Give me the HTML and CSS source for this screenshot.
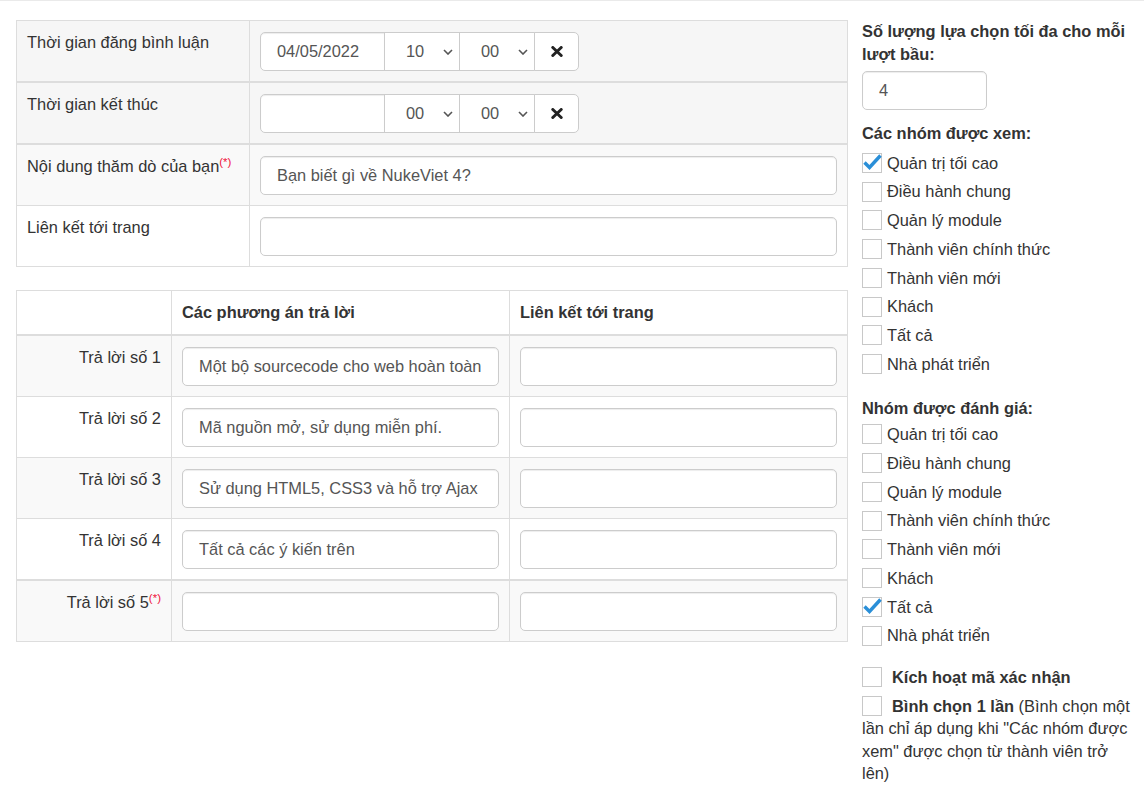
FILE: index.html
```html
<!DOCTYPE html>
<html lang="vi">
<head>
<meta charset="utf-8">
<title>Thăm dò ý kiến</title>
<link rel="stylesheet" href="styles.css">
</head>
<body>
<div class="page">
  <div class="main">
    <table class="tbl tbl-info">
      <colgroup><col class="col-label"><col></colgroup>
      <thead>
        <tr>
          <td>Thời gian đăng bình luận</td>
          <td>
            <div class="input-group">
              <div class="ig-date">04/05/2022</div>
              <div class="ig-select"><span>10</span><svg class="chev" width="10" height="6" viewBox="0 0 10 6"><path d="M1 1l4 4 4-4" fill="none" stroke="#555" stroke-width="1.6"/></svg></div>
              <div class="ig-select"><span>00</span><svg class="chev" width="10" height="6" viewBox="0 0 10 6"><path d="M1 1l4 4 4-4" fill="none" stroke="#555" stroke-width="1.6"/></svg></div>
              <div class="ig-btn"><svg width="12" height="11" viewBox="0 0 12 11"><path d="M1.8 1.5l8.4 8M10.2 1.5l-8.4 8" stroke="#222" stroke-width="3" stroke-linecap="round"/></svg></div>
            </div>
          </td>
        </tr>
        <tr>
          <td>Thời gian kết thúc</td>
          <td>
            <div class="input-group">
              <div class="ig-date"></div>
              <div class="ig-select"><span>00</span><svg class="chev" width="10" height="6" viewBox="0 0 10 6"><path d="M1 1l4 4 4-4" fill="none" stroke="#555" stroke-width="1.6"/></svg></div>
              <div class="ig-select"><span>00</span><svg class="chev" width="10" height="6" viewBox="0 0 10 6"><path d="M1 1l4 4 4-4" fill="none" stroke="#555" stroke-width="1.6"/></svg></div>
              <div class="ig-btn"><svg width="12" height="11" viewBox="0 0 12 11"><path d="M1.8 1.5l8.4 8M10.2 1.5l-8.4 8" stroke="#222" stroke-width="3" stroke-linecap="round"/></svg></div>
            </div>
          </td>
        </tr>
      </thead>
      <tbody>
        <tr class="odd">
          <td>Nội dung thăm dò của bạn<sup class="req">(*)</sup></td>
          <td><div class="form-control">Bạn biết gì về NukeViet 4?</div></td>
        </tr>
        <tr>
          <td>Liên kết tới trang</td>
          <td><div class="form-control"></div></td>
        </tr>
      </tbody>
    </table>

    <table class="tbl tbl-answers">
      <colgroup><col class="col-num"><col><col></colgroup>
      <thead>
        <tr>
          <th></th>
          <th>Các phương án trả lời</th>
          <th>Liên kết tới trang</th>
        </tr>
      </thead>
      <tbody>
        <tr class="odd">
          <td class="num">Trả lời số 1</td>
          <td><div class="form-control">Một bộ sourcecode cho web hoàn toàn</div></td>
          <td><div class="form-control"></div></td>
        </tr>
        <tr>
          <td class="num">Trả lời số 2</td>
          <td><div class="form-control">Mã nguồn mở, sử dụng miễn phí.</div></td>
          <td><div class="form-control"></div></td>
        </tr>
        <tr class="odd">
          <td class="num">Trả lời số 3</td>
          <td><div class="form-control">Sử dụng HTML5, CSS3 và hỗ trợ Ajax</div></td>
          <td><div class="form-control"></div></td>
        </tr>
        <tr>
          <td class="num">Trả lời số 4</td>
          <td><div class="form-control">Tất cả các ý kiến trên</div></td>
          <td><div class="form-control"></div></td>
        </tr>
      </tbody>
      <tfoot>
        <tr class="odd">
          <td class="num">Trả lời số 5<sup class="req">(*)</sup></td>
          <td><div class="form-control"></div></td>
          <td><div class="form-control"></div></td>
        </tr>
      </tfoot>
    </table>
  </div>

  <aside class="side">
    <h4 class="side-title">Số lượng lựa chọn tối đa cho mỗi lượt bầu:</h4>
    <div class="form-control small-input">4</div>

    <h4 class="side-title gap">Các nhóm được xem:</h4>
    <ul class="cb-list">
      <li><span class="cb"><svg width="20" height="20" viewBox="0 0 20 20"><path d="M2.5 9.5l5 5L18.5 2.5" fill="none" stroke="#2a8fd8" stroke-width="3.4"/></svg></span>Quản trị tối cao</li>
      <li><span class="cb"></span>Điều hành chung</li>
      <li><span class="cb"></span>Quản lý module</li>
      <li><span class="cb"></span>Thành viên chính thức</li>
      <li><span class="cb"></span>Thành viên mới</li>
      <li><span class="cb"></span>Khách</li>
      <li><span class="cb"></span>Tất cả</li>
      <li><span class="cb"></span>Nhà phát triển</li>
    </ul>

    <h4 class="side-title gap2">Nhóm được đánh giá:</h4>
    <ul class="cb-list">
      <li><span class="cb"></span>Quản trị tối cao</li>
      <li><span class="cb"></span>Điều hành chung</li>
      <li><span class="cb"></span>Quản lý module</li>
      <li><span class="cb"></span>Thành viên chính thức</li>
      <li><span class="cb"></span>Thành viên mới</li>
      <li><span class="cb"></span>Khách</li>
      <li><span class="cb"><svg width="20" height="20" viewBox="0 0 20 20"><path d="M2.5 9.5l5 5L18.5 2.5" fill="none" stroke="#2a8fd8" stroke-width="3.4"/></svg></span>Tất cả</li>
      <li><span class="cb"></span>Nhà phát triển</li>
    </ul>

    <p class="opt first"><span class="cb inline"></span><strong>Kích hoạt mã xác nhận</strong></p>
    <p class="opt"><span class="cb inline"></span><strong>Bình chọn 1 lần</strong> (Bình chọn một lần chỉ áp dụng khi "Các nhóm được xem" được chọn từ thành viên trở lên)</p>
  </aside>
</div>
</body>
</html>
```

FILE: styles.css
```css
html, body {
  margin: 0;
  padding: 0;
  background: #fff;
}

body {
  font-family: "Liberation Sans", Arial, Helvetica, sans-serif;
  font-size: 16.4px;
  line-height: 23.4px;
  color: #333;
  border-top: 1px solid #eaeaea;
}

.page {
  display: grid;
  grid-template-columns: 832px 276px;
  column-gap: 14px;
  padding: 19px 0 0 16px;
  align-items: start;
}

/* tables */
.tbl {
  width: 100%;
  border-collapse: collapse;
  table-layout: fixed;
  border: 1px solid #ddd;
}

.tbl td,
.tbl th {
  border: 1px solid #ddd;
  padding: 10px;
  vertical-align: top;
  text-align: left;
}

.tbl th {
  font-weight: bold;
  border-bottom: 2px solid #ddd;
  background: #fff;
}

.tbl tr.odd td {
  background: #f9f9f9;
}

.tbl-info {
  margin-bottom: 23px;
}

.tbl-info .col-label {
  width: 233px;
}

.tbl-info thead td {
  background: #f6f6f6;
  border-bottom: 2px solid #ddd;
}

.tbl-answers .col-num {
  width: 155px;
}

.tbl-answers tfoot td {
  border-top: 2px solid #ddd;
}

.tbl td.num {
  text-align: right;
}

.req {
  color: #f0143c;
  font-size: 11.5px;
  line-height: 1;
  vertical-align: 6px;
}

/* inputs */
.form-control {
  box-sizing: border-box;
  height: 39px;
  margin-top: 1px;
  padding: 0 16px;
  border: 1px solid #ccc;
  border-radius: 5px;
  background: #fff;
  box-shadow: inset 0 1px 1px rgba(0, 0, 0, 0.075);
  color: #555;
  display: flex;
  align-items: center;
  white-space: nowrap;
  overflow: hidden;
}

.input-group {
  display: flex;
  height: 39px;
  margin-top: 1px;
  width: 319px;
}

.input-group > div {
  box-sizing: border-box;
  height: 39px;
  border: 1px solid #ccc;
  background: #fff;
  color: #555;
  display: flex;
  align-items: center;
}

.input-group > div + div {
  margin-left: -1px;
}

.ig-date {
  width: 125px;
  padding-left: 16px;
  border-radius: 5px 0 0 5px;
  box-shadow: inset 0 1px 1px rgba(0, 0, 0, 0.075);
}

.ig-select {
  width: 76px;
  padding: 0 6px 0 21px;
  justify-content: space-between;
}

.ig-select .chev {
  display: block;
  margin-top: 1px;
}

.ig-btn {
  width: 45px;
  justify-content: center;
  border-radius: 0 5px 5px 0;
}

.ig-btn svg {
  display: block;
}

/* sidebar */
.side {
  line-height: 22.5px;
}

.side-title {
  margin: 0;
  font-size: 16.4px;
  font-weight: bold;
}

.side-title.gap {
  margin-top: 12px;
  margin-bottom: 4px;
}

.side-title.gap2 {
  margin-top: 18px;
  margin-bottom: 1px;
}

.small-input {
  width: 125px;
  margin-top: 6px;
}

.cb-list {
  list-style: none;
  margin: 0;
  padding: 0;
}

.cb-list li {
  display: flex;
  align-items: center;
  height: 28.75px;
}

.cb {
  box-sizing: border-box;
  flex: none;
  width: 20px;
  height: 20px;
  border: 1px solid #c8c8c8;
  background: #fff;
  margin-right: 5px;
  position: relative;
}

.cb svg {
  position: absolute;
  left: -1px;
  top: -1px;
  overflow: visible;
}

.cb.inline {
  display: inline-block;
  vertical-align: -4px;
  margin-right: 10px;
}

.opt {
  margin: 6px 0 0;
}

.opt.first {
  margin-top: 16px;
}
```
